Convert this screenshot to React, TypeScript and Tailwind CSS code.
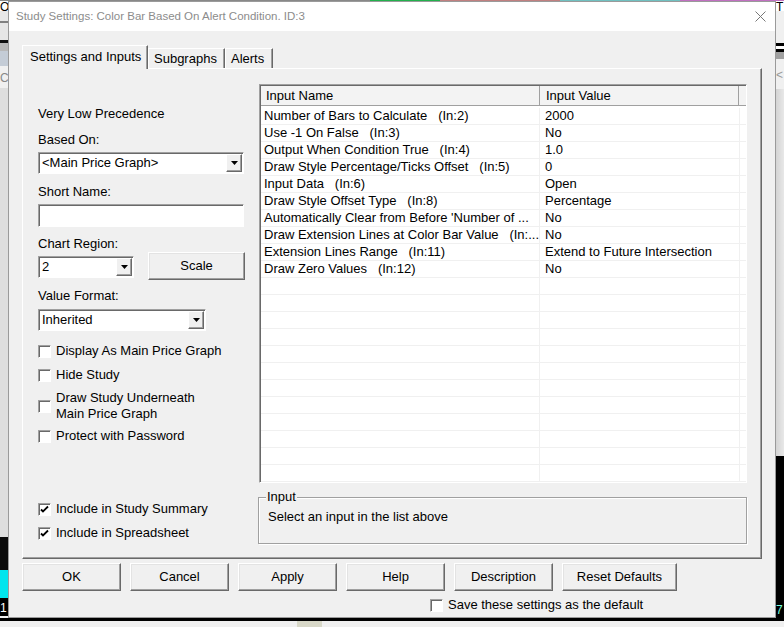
import React from "react";

const FONT = { fontFamily: '"Liberation Sans", Arial, sans-serif' };

const rows: [string, string][] = [
  ["Number of Bars to Calculate   (In:2)", "2000"],
  ["Use -1 On False   (In:3)", "No"],
  ["Output When Condition True   (In:4)", "1.0"],
  ["Draw Style Percentage/Ticks Offset   (In:5)", "0"],
  ["Input Data   (In:6)", "Open"],
  ["Draw Style Offset Type   (In:8)", "Percentage"],
  ["Automatically Clear from Before 'Number of ...", "No"],
  ["Draw Extension Lines at Color Bar Value   (In:...", "No"],
  ["Extension Lines Range   (In:11)", "Extend to Future Intersection"],
  ["Draw Zero Values   (In:12)", "No"],
];

const ArrowBtn = () => (
  <div className="m-[1px] flex w-[16px] items-center justify-center border border-t-white border-l-white border-r-[#696969] border-b-[#696969] bg-[#f0f0f0] shadow-[inset_-1px_-1px_0_#a0a0a0]">
    <svg width="7" height="4" viewBox="0 0 7 4">
      <path d="M0 0h7L3.5 4z" fill="#000" />
    </svg>
  </div>
);

const Combo = ({ value, w }: { value: string; w: string }) => (
  <div
    className={`flex h-[22px] ${w} border border-t-[#a0a0a0] border-l-[#a0a0a0] border-r-white border-b-white bg-white shadow-[inset_1px_1px_0_#696969]`}
  >
    <div className="flex flex-1 items-center pl-[3px] text-[13px] leading-4 text-black">{value}</div>
    <ArrowBtn />
  </div>
);

const Check = ({ checked, children }: { checked?: boolean; children: React.ReactNode }) => (
  <div className="flex items-center gap-[5px] text-[13px] leading-4 text-black">
    <div className="flex h-[13px] w-[13px] shrink-0 items-center justify-center border border-t-[#a0a0a0] border-l-[#a0a0a0] border-r-white border-b-white bg-white shadow-[inset_1px_1px_0_#696969]">
      {checked && (
        <svg width="9" height="9" viewBox="0 0 9 9">
          <path d="M1 4.5l2 2 5-5" fill="none" stroke="#000" strokeWidth="1.8" />
        </svg>
      )}
    </div>
    <div>{children}</div>
  </div>
);

const Btn = ({ label, w = "w-[99px]" }: { label: string; w?: string }) => (
  <div
    className={`flex h-[28px] ${w} items-center justify-center border border-t-white border-l-white border-r-[#696969] border-b-[#696969] bg-[#f0f0f0] text-[13px] text-black shadow-[inset_-1px_-1px_0_#a0a0a0,inset_1px_1px_0_#e3e3e3]`}
  >
    {label}
  </div>
);

const LeftStrip = () => (
  <div className="flex w-[8px] flex-col overflow-hidden text-[12px] leading-none">
    <div className="h-[10px] bg-white text-black">O</div>
    <div className="h-[10px] bg-[#e8e8e8]" />
    <div className="h-[2px] bg-[#808080]" />
    <div className="h-[17px] bg-[#e6e6e6]" />
    <div className="h-[3px] bg-[#111]" />
    <div className="h-[8px] bg-[#b8b8b8]" />
    <div className="h-[15px] bg-[#c4ccd6]" />
    <div className="h-[22px] bg-[#f0f0f0] pt-[6px] text-[#888]">C</div>
    <div className="h-[449px] bg-[#dedede]" />
    <div className="h-[33px] bg-[#0a0a0a]" />
    <div className="h-[28px] bg-[#00e5ee]" />
    <div className="h-[18px] bg-black pt-[4px] text-white">1</div>
  </div>
);

const RightStrip = () => (
  <div className="flex w-[8px] flex-col overflow-hidden text-[12px] leading-none">
    <div className="h-[10px] bg-white text-black">T</div>
    <div className="h-[32px] bg-[#f0f0f0]" />
    <div className="h-[3px] bg-black" />
    <div className="h-[3px] bg-white" />
    <div className="h-[3px] bg-black" />
    <div className="h-[7px] bg-[#a0a0a0]" />
    <div className="h-[30px] bg-[#f0f0f0] pt-[10px] text-[#999]">&lt;</div>
    <div className="h-[367px] bg-gradient-to-r from-[#d4d4d4] to-[#e8e8e8]" />
    <div className="h-[146px] bg-black" />
    <div className="h-[16px] bg-black pt-[2px] text-[#7fd]">7</div>
  </div>
);

export default function App() {
  return (
    <div className="flex h-[627px] w-[784px] flex-col overflow-hidden bg-[#f0f0f0]" style={FONT}>
      <div className="flex h-[1px]">
        <div className="w-[370px] bg-[#888]" />
        <div className="w-[70px] bg-[#22b14c]" />
        <div className="w-[120px] bg-[#c08080]" />
        <div className="w-[120px] bg-[#70c0c0]" />
        <div className="w-[104px] bg-[#c070c0]" />
      </div>
      <div className="flex h-[617px]">
        <LeftStrip />
        <div className="flex w-[768px] flex-col border border-[#9a9a9a] bg-[#f0f0f0]">
          {/* title bar */}
          <div className="flex h-[29px] shrink-0 items-center justify-between bg-white pl-[7px] pr-[9px]">
            <span className="text-[11.5px] text-[#8c8c8c]">Study Settings: Color Bar Based On Alert Condition. ID:3</span>
            <svg width="11" height="11" viewBox="0 0 11 11">
              <path d="M0.5 0.5l10 10M10.5 0.5l-10 10" stroke="#777" strokeWidth="1" />
            </svg>
          </div>

          <div className="flex flex-col pl-[13px] pt-[14px]">
            {/* tabs */}
            <div className="flex h-[23px] items-end text-[13px] leading-4 text-black">
              <div className="relative z-10 -mb-[1px] flex h-[24px] w-[126px] items-start border border-b-0 border-t-white border-l-white border-r-[#696969] bg-[#f0f0f0] pl-[7px] pt-[3px] shadow-[inset_-1px_0_0_#a0a0a0]">
                Settings and Inputs
              </div>
              <div className="flex h-[20px] w-[77px] items-start border border-b-0 border-t-white border-l-white border-r-[#696969] pl-[5px] pt-[2px] shadow-[inset_-1px_0_0_#a0a0a0]">
                Subgraphs
              </div>
              <div className="flex h-[20px] w-[48px] items-start border border-b-0 border-t-white border-l-white border-r-[#696969] pl-[5px] pt-[2px] shadow-[inset_-1px_0_0_#a0a0a0]">
                Alerts
              </div>
            </div>

            {/* panel */}
            <div className="flex h-[491px] w-[740px] border border-t-white border-l-white border-r-[#696969] border-b-[#696969] shadow-[inset_-1px_-1px_0_#a0a0a0]">
              {/* left column */}
              <div className="ml-[15px] flex w-[207px] flex-col pt-[37px] text-[13px] leading-4 text-black">
                <div>Very Low Precedence</div>
                <div className="mt-[10px]">Based On:</div>
                <div className="mt-[4px]">
                  <Combo value="<Main Price Graph>" w="w-[206px]" />
                </div>
                <div className="mt-[10px]">Short Name:</div>
                <div className="mt-[4px] h-[23px] w-[206px] border border-t-[#a0a0a0] border-l-[#a0a0a0] border-r-white border-b-white bg-white shadow-[inset_1px_1px_0_#696969]" />
                <div className="mt-[9px]">Chart Region:</div>
                <div className="flex h-[27px] items-start">
                  <div className="mt-[4px]">
                    <Combo value="2" w="w-[96px]" />
                  </div>
                  <div className="ml-[14px]">
                    <Btn label="Scale" w="w-[97px]" />
                  </div>
                </div>
                <div className="mt-[9px]">Value Format:</div>
                <div className="mt-[5px]">
                  <Combo value="Inherited" w="w-[168px]" />
                </div>
                <div className="mt-[12px]">
                  <Check>Display As Main Price Graph</Check>
                </div>
                <div className="mt-[8px]">
                  <Check>Hide Study</Check>
                </div>
                <div className="mt-[7px]">
                  <Check>
                    Draw Study Underneath
                    <br />
                    Main Price Graph
                  </Check>
                </div>
                <div className="mt-[6px]">
                  <Check>Protect with Password</Check>
                </div>
                <div className="mt-[57px]">
                  <Check checked>Include in Study Summary</Check>
                </div>
                <div className="mt-[8px]">
                  <Check checked>Include in Spreadsheet</Check>
                </div>
              </div>

              {/* right column */}
              <div className="ml-[14px] flex w-[488px] flex-col pt-[15px]">
                <div className="flex h-[399px] flex-col overflow-hidden border border-t-[#a0a0a0] border-l-[#a0a0a0] border-r-white border-b-white bg-white shadow-[inset_1px_1px_0_#696969]">
                  <div className="ml-[1px] mt-[1px] flex h-[20px] shrink-0 text-[13px] leading-4 text-black">
                    <div className="flex w-[279px] items-center border-b border-r border-b-[#a0a0a0] border-r-[#a0a0a0] bg-[#f3f3f3] pl-[5px]">
                      Input Name
                    </div>
                    <div className="flex w-[199px] items-center border-b border-r border-b-[#a0a0a0] border-r-[#a0a0a0] bg-[#f3f3f3] pl-[6px]">
                      Input Value
                    </div>
                    <div className="flex-1 border-b border-b-[#a0a0a0] bg-[#f3f3f3]" />
                  </div>
                  <div className="ml-[1px] mt-[2px] flex flex-col">
                    {Array.from({ length: 22 }).map((_, i) => {
                      const r = rows[i];
                      return (
                        <div key={i} className="flex h-[17px] shrink-0 border-b border-[#f0f0f0] text-[13px] leading-4 text-black">
                          <div className="w-[279px] overflow-hidden whitespace-pre border-r border-[#f0f0f0] pl-[3px]">
                            {r ? r[0] : ""}
                          </div>
                          <div className="w-[200px] overflow-hidden whitespace-pre border-r border-[#f0f0f0] pl-[5px]">
                            {r ? r[1] : ""}
                          </div>
                          <div className="flex-1" />
                        </div>
                      );
                    })}
                  </div>
                </div>

                {/* input group box */}
                <div className="relative mt-[14px] h-[47px] w-[489px] -ml-[1px] border border-[#a0a0a0] shadow-[inset_1px_1px_0_white,1px_1px_0_white]">
                  <div className="absolute -top-[9px] left-[7px] bg-[#f0f0f0] px-[1px] text-[13px] leading-4 text-black">Input</div>
                  <div className="pl-[9px] pt-[11px] text-[13px] leading-4 text-black">Select an input in the list above</div>
                </div>
              </div>
            </div>

            {/* buttons */}
            <div className="mt-[4px] flex gap-[9px]">
              <Btn label="OK" />
              <Btn label="Cancel" />
              <Btn label="Apply" />
              <Btn label="Help" />
              <Btn label="Description" />
              <Btn label="Reset Defaults" w="w-[115px]" />
            </div>
            <div className="ml-[408px] mt-[6px]">
              <Check>Save these settings as the default</Check>
            </div>
          </div>
        </div>
        <RightStrip />
      </div>
      <div className="h-[3px] bg-black" />
      <div className="flex h-[6px]">
        <div className="w-[297px] bg-[#f0f0f0]" />
        <div className="w-[25px] bg-[#d8d8c8]" />
        <div className="flex-1 bg-[#f0f0f0]" />
      </div>
    </div>
  );
}
